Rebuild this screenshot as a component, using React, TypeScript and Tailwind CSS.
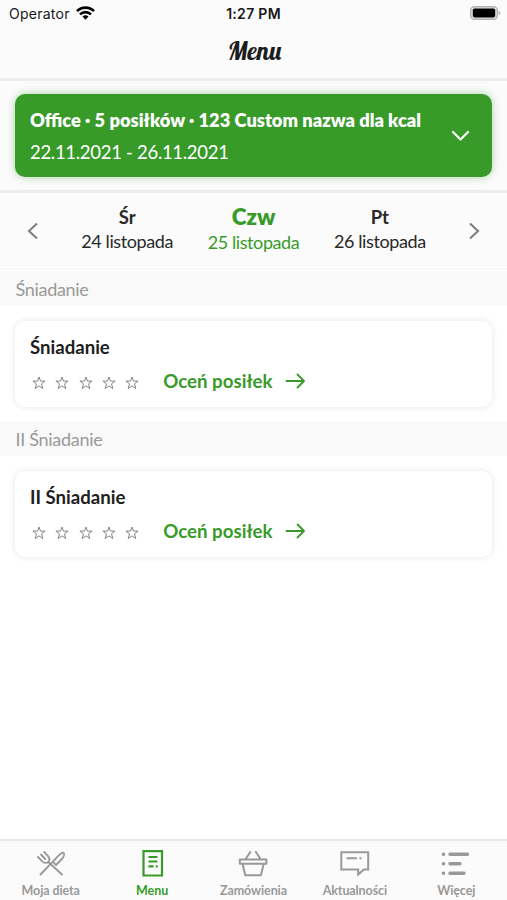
import { useState } from 'react';

const days = [
  { name: 'Śr', date: '24 listopada' },
  { name: 'Czw', date: '25 listopada' },
  { name: 'Pt', date: '26 listopada' },
];

const meals = ['Śniadanie', 'II Śniadanie'];

const tabs = [
  { label: 'Moja dieta', icon: <CutleryIcon /> },
  { label: 'Menu', icon: <MenuIcon /> },
  { label: 'Zamówienia', icon: <BasketIcon /> },
  { label: 'Aktualności', icon: <NewsIcon /> },
  { label: 'Więcej', icon: <MoreIcon /> },
];

function CutleryIcon() {
  return (
    <svg width="30" height="28" viewBox="0 0 30 28" fill="none" stroke="currentColor" strokeWidth="1.9" strokeLinecap="round" strokeLinejoin="round">
      <path d="M4.5 24.5 23 5.2c1.4-1.4 3.6-3 4.6-2.2 1 .9.2 3.6-1.3 5.5L20 15l-2.3-2.3" />
      <path d="M26 24.5 12.3 12M8.2 2l3.6 3.8c1.7 1.8 1.9 4.4.5 6.2M2 7l4 4.2c1.9 1.9 4.6 2.3 6.3.8M5 4.5 9.2 9" />
    </svg>
  );
}

function MenuIcon() {
  return (
    <svg width="30" height="28" viewBox="0 0 30 28" fill="none" stroke="currentColor" strokeWidth="2.2">
      <path d="M6.5 1.2h18.5v24.3H6.5z" />
      <path d="M11.5 7h9M11.5 11.5h9M11.5 16.3h5M18.8 16.3h2" />
    </svg>
  );
}

function BasketIcon() {
  return (
    <svg width="30" height="28" viewBox="0 0 30 28" fill="none" stroke="currentColor" strokeWidth="2" strokeLinejoin="round">
      <path d="M1.8 9.5h26.6v4.2H1.8zM4.5 13.7l2.8 11.5h15.6l2.8-11.5M12.8 1.2 7.3 9.5M17.4 1.2l5.5 8.3" />
    </svg>
  );
}

function NewsIcon() {
  return (
    <svg width="30" height="28" viewBox="0 0 30 28" fill="none" stroke="currentColor" strokeWidth="2">
      <path d="M1.3 2.3h26.9v17.2h-4.4l-5.6 5v-5H1.3z" />
      <path d="M6.5 8.3H17M19.5 8.3h2" />
    </svg>
  );
}

function MoreIcon() {
  return (
    <svg width="30" height="28" viewBox="0 0 30 28" fill="none" stroke="currentColor" strokeWidth="3.4" strokeLinecap="round">
      <path d="M2.4 4.3h.2M9 4.3h17.5M2.4 13.7h.2M9 13.7h10M2.4 23.2h.2M9 23.2h14" />
    </svg>
  );
}

function StatusBar() {
  return (
    <div className="relative flex h-[27px] items-center justify-between pl-[9px] pr-1.5 font-['Inter',sans-serif] text-[13px] text-[#171717]">
      <div className="flex items-center gap-[6px]">
        <span className="text-[14px] tracking-[0.25px]">Operator</span>
        <svg width="19" height="14" viewBox="0 0 19 14" fill="none" stroke="#000" strokeWidth="2.6" className="-mt-0.5">
          <path d="M1 5.2a12 12 0 0 1 17 0M4 8.4a7.8 7.8 0 0 1 11 0" />
          <path d="m9.5 13.8-3-3.2a4.2 4.2 0 0 1 6 0z" fill="#000" stroke="none" />
        </svg>
      </div>
      <span className="absolute inset-x-0 text-center text-[14px] font-semibold tracking-[0.3px]">1:27 PM</span>
      <svg width="31" height="14" viewBox="0 0 31 14" className="-mt-0.5">
        <rect x=".7" y=".7" width="26.6" height="12.6" rx="3.8" fill="#e4e4e4" stroke="#b4b4b4" strokeWidth="1.4" />
        <rect x="2.8" y="2.5" width="22.4" height="9" rx="1.8" />
        <path d="M28.6 4.8c2.4.8 2.4 3.6 0 4.4z" fill="#b4b4b4" />
      </svg>
    </div>
  );
}

function Star() {
  return (
    <svg width="14" height="14" viewBox="0 0 14 14" fill="none" stroke="#858585" strokeWidth="1">
      <path d="m7 1 1.5 4.1h4.6L9.5 7.8l1.3 4.7L7 9.9l-3.8 2.6 1.3-4.7L.9 5.1h4.6z" />
    </svg>
  );
}

function Meal({ name }: { name: string }) {
  return (
    <section>
      <h2 className="h-[35px] bg-[#f9f9f9] pl-[15.5px] text-[18px] leading-[36px] tracking-[-0.3px] text-[#999]">{name}</h2>
      <div className="px-[15px] py-[14.6px]">
        <div className="h-[86px] rounded-[10px] bg-white px-[15px] pt-3.5 shadow-[0_0_7px_rgba(0,0,0,0.11)]">
          <h3 className="text-[18.6px] font-bold leading-6 text-[#202020]">{name}</h3>
          <div className="mt-[10.5px] flex h-6 items-center">
            <div className="flex gap-[9.3px] pl-[2px] pt-1">
              {[1, 2, 3, 4, 5].map((n) => (
                <Star key={n} />
              ))}
            </div>
            <button className="ml-[24px] flex items-center gap-[12px] text-[18.7px] font-bold text-[#389b29]">
              Oceń posiłek
              <svg width="21" height="16" viewBox="0 0 21 16" fill="none" stroke="currentColor" strokeWidth="1.9" strokeLinecap="round" strokeLinejoin="round">
                <path d="M1.5 8h17.5M12.5 1.5 19 8l-6.5 6.5" />
              </svg>
            </button>
          </div>
        </div>
      </div>
    </section>
  );
}

export default function App() {
  const [day, setDay] = useState(1);
  const [tab, setTab] = useState(1);

  return (
    <div className="flex h-screen flex-col overflow-hidden bg-white font-['Lato',sans-serif] text-[#292929]">
      <header className="h-[81px] shrink-0 border-b-[3px] border-[#ededed] bg-[#fbfbfb]">
        <StatusBar />
        <h1 className="flex h-12 items-center justify-center pl-0.5 font-['Lobster','Liberation_Serif',serif] text-[25px] text-[#1d1d1d]">Menu</h1>
      </header>

      <div className="h-[112px] shrink-0 border-b-[3px] border-[#ededed] bg-[#fbfbfb] px-[15px] pt-[13px]">
        <button className="flex h-[83px] w-full items-center justify-between rounded-[10px] bg-[#389b29] pl-[15px] pr-[22px] text-left text-white shadow-[0_0_8px_rgba(56,155,41,0.4)]">
          <span className="text-[18.5px] leading-8">
            <b className="block whitespace-nowrap text-[18.3px] font-extrabold">Office · 5 posiłków · 123 Custom nazwa dla kcal</b>
            <span className="block tracking-[-0.3px]">22.11.2021 - 26.11.2021</span>
          </span>
          <svg width="19" height="12" viewBox="0 0 19 12" fill="none" stroke="currentColor" strokeWidth="2.2" strokeLinecap="round" strokeLinejoin="round">
            <path d="m2 2 7.5 7.5L17 2" />
          </svg>
        </button>
      </div>

      <nav className="flex h-[77px] shrink-0 items-center justify-between border-b border-[#f4f4f4] bg-[#fbfbfb] px-[26px]">
        <button onClick={() => setDay(Math.max(0, day - 1))} className="text-[#808080]">
          <svg width="13" height="18" viewBox="0 0 13 18" fill="none" stroke="currentColor" strokeWidth="2.1">
            <path d="M11 1.5 3 9l8 7.5" />
          </svg>
        </button>
        <div className="grid w-[379px] shrink-0 grid-cols-3 pb-[5px]">
          {days.map((d, i) => (
            <button key={d.name} onClick={() => setDay(i)} className={i === day ? 'pt-px text-[#389b29]' : ''}>
              <b className={i === day ? 'block text-[22.5px] font-extrabold leading-[26px]' : 'block text-[18.5px] leading-6'}>{d.name}</b>
              <span className="block text-[18px] leading-6 tracking-[-0.4px]">{d.date}</span>
            </button>
          ))}
        </div>
        <button onClick={() => setDay(Math.min(2, day + 1))} className="text-[#808080]">
          <svg width="13" height="18" viewBox="0 0 13 18" fill="none" stroke="currentColor" strokeWidth="2.1">
            <path d="m2 1.5 8 7.5-8 7.5" />
          </svg>
        </button>
      </nav>

      <main className="flex-1 pt-px">
        {meals.map((name) => (
          <Meal key={name} name={name} />
        ))}
      </main>

      <footer className="grid h-[61px] shrink-0 grid-cols-5 border-t-2 border-[#e8e8e8] bg-[#fbfbfb]">
        {tabs.map((t, i) => (
          <button
            key={t.label}
            onClick={() => setTab(i)}
            className={i === tab ? 'flex flex-col items-center pt-[9px] text-[#389b29]' : 'flex flex-col items-center pt-[9px] text-[#999]'}
          >
            {t.icon}
            <span className="mt-[5px] text-[12.5px] font-bold leading-4 tracking-[-0.1px]">{t.label}</span>
          </button>
        ))}
      </footer>
    </div>
  );
}
